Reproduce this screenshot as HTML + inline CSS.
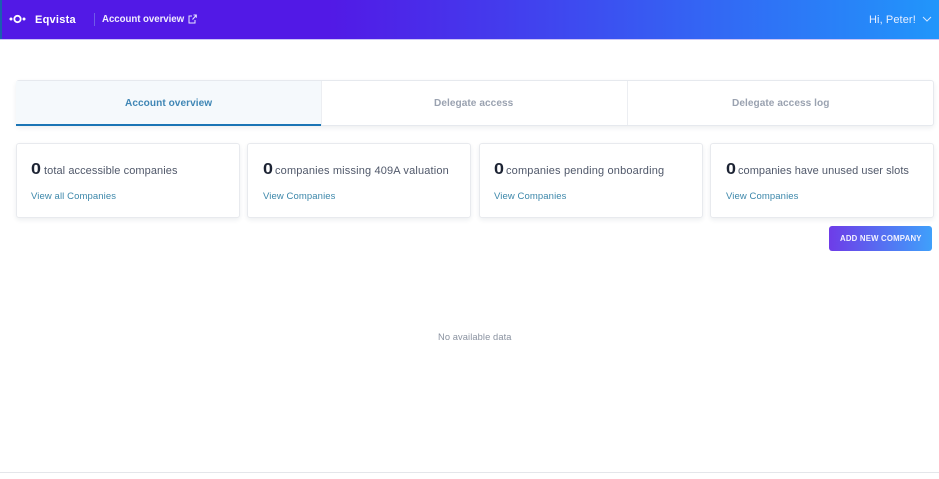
<!DOCTYPE html>
<html lang="en"><head><meta charset="utf-8"><title>Eqvista</title>
<style>
*{box-sizing:border-box}
html,body{margin:0;padding:0;width:939px;height:479px;overflow:hidden;background:#fff;font-family:"Liberation Sans",sans-serif}
#w{position:absolute;left:0;top:0;width:939px;height:479px;filter:blur(.3px)}
.t{position:absolute;white-space:nowrap;line-height:14px}
.top{position:absolute;left:0;top:0;width:939px;height:39px;background:linear-gradient(90deg,#5219e6 0%,#5219e6 35%,#3d4cf0 62%,#2196fb 100%);box-shadow:0 1px 0 rgba(82,60,230,.3)}
.edge{position:absolute;left:0;top:0;width:2px;height:39px;background:#1a5fb0}
.tabs{position:absolute;left:16px;top:80px;width:918px;height:46px;background:#fff;border:1px solid #e6e9ee;border-radius:3px;box-shadow:0 2px 5px rgba(30,50,80,.08)}
.tab0{position:absolute;left:16px;top:81px;width:305px;height:45px;background:#f5f9fc;border-bottom:2px solid #1b75b5}
.div{position:absolute;top:81px;width:1px;height:44px;background:#eceef2}
.card{position:absolute;top:143px;height:75px;background:#fff;border:1px solid #e8eaee;border-radius:3px;box-shadow:0 2px 5px rgba(30,50,80,.08)}
.num{font-size:16px;font-weight:bold;color:#1c2333;top:163px;transform:scaleX(1.12);transform-origin:0 50%}
.lab{font-size:11px;color:#50586a;top:164px}
.lnk{font-size:9.5px;color:#3c87aa;top:190px}
.btn{position:absolute;left:829px;top:226px;width:103px;height:25px;border-radius:3px;background:linear-gradient(90deg,#6e3ce8,#3fa0fb)}
.tb{font-size:10.1px;font-weight:bold;top:97px;letter-spacing:.05px}
</style></head><body><div id="w">
<div class="top"></div><div class="edge"></div>
<svg style="position:absolute;left:9px;top:13px" width="17" height="12" viewBox="0 0 17 12"><circle cx="8.500" cy="6" r="3.200" fill="none" stroke="#fff" stroke-width="1.800"/><circle cx="2" cy="6" r="1.500" fill="#fff"/><circle cx="15" cy="6" r="1.500" fill="#fff"/></svg>
<div class="t" style="left:35px;top:13px;font-size:11px;font-weight:bold;color:#fff;letter-spacing:.25px">Eqvista</div>
<div style="position:absolute;left:94px;top:13px;width:1px;height:13px;background:#6f5be8"></div>
<div class="t" style="left:102px;top:13px;font-size:9.700px;font-weight:bold;color:#f0edff;letter-spacing:-.05px">Account overview</div>
<svg style="position:absolute;left:188px;top:14px" width="9" height="10" viewBox="0 0 9 10" fill="none" stroke="#e8e6ff" stroke-width="1"><path d="M4 2H1v7h6V6M4.500 5.500 8 1.500M5.500 1H8.300V3.800"/></svg>
<div class="t" style="left:869px;top:13px;font-size:11px;color:#e6eeff;letter-spacing:.1px">Hi, Peter!</div>
<svg style="position:absolute;left:922px;top:16px" width="10" height="6" viewBox="0 0 10 6" fill="none" stroke="#d5e6ff" stroke-width="1"><path d="M1 1l4 4 4-4"/></svg>

<div class="tabs"></div><div class="tab0"></div>
<div class="div" style="left:321px"></div><div class="div" style="left:627px"></div>
<div class="t tb" style="left:125px;color:#3f86b5">Account overview</div>
<div class="t tb" style="left:434px;color:#9aa2b0">Delegate access</div>
<div class="t tb" style="left:732px;color:#9aa2b0">Delegate access log</div>

<div class="card" style="left:16px;width:224px"></div>
<div class="card" style="left:247px;width:224px"></div>
<div class="card" style="left:479px;width:224px"></div>
<div class="card" style="left:710px;width:224px"></div>

<div class="t num" style="left:31px">0</div><div class="t lab" style="left:44px;letter-spacing:.08px">total accessible companies</div><div class="t lnk" style="left:31px;letter-spacing:.1px">View all Companies</div>
<div class="t num" style="left:263px">0</div><div class="t lab" style="left:275px;letter-spacing:.16px">companies missing 409A valuation</div><div class="t lnk" style="left:263px;letter-spacing:.1px">View Companies</div>
<div class="t num" style="left:494px">0</div><div class="t lab" style="left:506px;letter-spacing:.17px">companies pending onboarding</div><div class="t lnk" style="left:494px;letter-spacing:.1px">View Companies</div>
<div class="t num" style="left:726px">0</div><div class="t lab" style="left:738px;letter-spacing:.05px">companies have unused user slots</div><div class="t lnk" style="left:726px;letter-spacing:.1px">View Companies</div>

<div class="btn"></div>
<div class="t" style="left:840px;top:232px;font-size:7.800px;font-weight:bold;color:#f2f2ff;letter-spacing:.2px">ADD NEW COMPANY</div>
<div class="t" style="left:438px;top:330px;font-size:9.300px;color:#8a92a0;letter-spacing:.1px">No available data</div>
<div style="position:absolute;left:0;top:472px;width:939px;height:1px;background:#e4e6ea"></div>
</div></body></html>
